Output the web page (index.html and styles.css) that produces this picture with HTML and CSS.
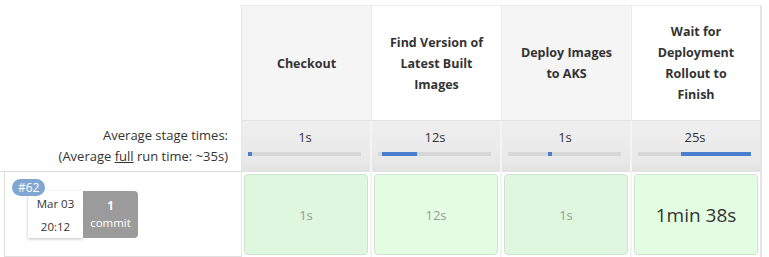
FILE: index.html
```html
<!DOCTYPE html>
<html>
<head>
<meta charset="utf-8">
<link rel="stylesheet" href="styles.css">
</head>
<body>
<div class="stage-view">
  <div class="corner"></div>
  <div class="head grey"><span>Checkout</span></div>
  <div class="head"><span>Find Version of Latest Built Images</span></div>
  <div class="head grey"><span>Deploy Images to AKS</span></div>
  <div class="head last"><span>Wait for Deployment Rollout to Finish</span></div>

  <div class="avg-label">
    <div>Average stage times:</div>
    <div>(Average <u>full</u> run time: ~35s)</div>
  </div>
  <div class="avg"><div class="t">1s</div><div class="bar"><div class="fill" style="margin-left:0;width:4px"></div></div></div>
  <div class="avg"><div class="t">12s</div><div class="bar"><div class="fill" style="margin-left:4px;width:35px"></div></div></div>
  <div class="avg"><div class="t">1s</div><div class="bar"><div class="fill" style="margin-left:40px;width:4px"></div></div></div>
  <div class="avg last"><div class="t">25s</div><div class="bar"><div class="fill" style="margin-left:43px;width:70px"></div></div></div>

  <div class="build">
    <div class="badge">#62</div>
    <div class="when">
      <div class="date"><div>Mar 03</div><div>20:12</div></div>
      <div class="commits"><div class="n">1</div><div>commit</div></div>
    </div>
  </div>
  <div class="cell"><div class="box">1s</div></div>
  <div class="cell"><div class="box alt">12s</div></div>
  <div class="cell"><div class="box">1s</div></div>
  <div class="cell last"><div class="box alt big">1min 38s</div></div>
</div>
</body>
</html>
```

FILE: styles.css
```css
html, body {
  margin: 0;
  padding: 0;
  background: #fff;
}
body {
  font-family: "Open Sans", "Noto Sans", sans-serif;
  color: #333;
}
.stage-view {
  display: grid;
  grid-template-columns: 242px repeat(4, 130px);
  grid-template-rows: 115px 52px 85px;
  padding-top: 5px;
}
.corner {
  border-right: 1px solid #e6e6e6;
}
.head {
  border-top: 1px solid #ececec;
  border-right: 1px solid #ececec;
  display: flex;
  align-items: center;
  justify-content: center;
  text-align: center;
  padding: 0 16px;
  font-weight: 700;
  font-size: 12.5px;
  line-height: 21px;
  background: #fff;
}
.head.grey {
  background: #f5f5f5;
}
.head.last {
  border-right: 2px solid #e4e4e4;
}
.avg-label {
  border-right: 1px solid #e6e6e6;
  border-bottom: 1px solid #dcdcdc;
  text-align: right;
  padding: 5px 13px 0 0;
  font-size: 13px;
  line-height: 21px;
}
.avg {
  background: linear-gradient(#efefef, #e9e9e9 75%, #e2e2e2);
  border-top: 1px solid #e2e2e2;
  border-right: 2px solid #f4f4f4;
  padding: 6px 8px 0 6px;
  font-size: 13px;
}
.avg.last {
  border-right: 2px solid #e4e4e4;
}
.avg .t {
  text-align: center;
  line-height: 20px;
  margin-bottom: 5px;
}
.bar {
  height: 4px;
  width: 113px;
  background: #d7d7d7;
  display: flex;
}
.fill {
  height: 4px;
  background: #4a7fcf;
}
.build {
  border-left: 1px solid #e0e0e0;
  border-right: 1px solid #e6e6e6;
  border-bottom: 1px solid #e0e0e0;
  margin-left: 4px;
  position: relative;
  padding: 19px 0 0 23px;
}
.badge {
  position: absolute;
  left: 7px;
  top: 7px;
  background: #80a6d2;
  color: #fff;
  font-size: 12px;
  line-height: 17px;
  padding: 0 6px;
  border-radius: 9px;
  z-index: 1;
}
.when {
  display: flex;
  width: 110px;
  height: 47px;
  font-size: 11.5px;
}
.date {
  width: 55px;
  background: #fff;
  box-shadow: 0 1px 3px rgba(0,0,0,0.25);
  text-align: center;
  padding-top: 1px;
  line-height: 23px;
}
.commits {
  width: 55px;
  background: #9b9b9b;
  color: #fff;
  border-radius: 0 4px 4px 0;
  text-align: center;
  padding-top: 6px;
  line-height: 17px;
}
.commits .n {
  font-weight: 700;
}
.cell {
  border-right: 2px solid #f4f4f4;
  padding: 2px;
}
.cell.last {
  border-right: 2px solid #e4e4e4;
}
.box {
  height: 100%;
  box-sizing: border-box;
  border: 1px solid #cfe3cf;
  border-radius: 4px;
  background: #dff6df;
  display: flex;
  align-items: center;
  justify-content: center;
  color: #999;
  font-size: 13px;
}
.box.alt {
  background: #e3fde3;
}
.box.big {
  font-size: 19px;
  color: #333;
}
```
